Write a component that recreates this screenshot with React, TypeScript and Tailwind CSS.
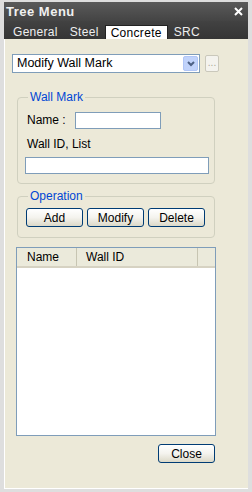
const FONT = "font-['Liberation_Sans',Arial,sans-serif]";

function XpButton({ label, className = '' }: { label: string; className?: string }) {
  return (
    <button
      className={`h-[19px] rounded-[3px] border border-[#003c74] bg-gradient-to-b from-white via-[#f4f3ee] to-[#dcd9c8] text-[12px] leading-none text-black ${className}`}
    >
      {label}
    </button>
  );
}

function GroupBox({ title, className = '', children }: { title: string; className?: string; children: React.ReactNode }) {
  return (
    <fieldset className={`ml-[12px] w-[198px] rounded-[4px] border border-[#d0d0bf] ${className}`}>
      <legend className="ml-[10px] px-[2px] text-[12px] leading-[12px] text-[#0046d5]">{title}</legend>
      {children}
    </fieldset>
  );
}

export default function App() {
  const tabs = ['General', 'Steel', 'Concrete', 'SRC'];
  const active = 'Concrete';

  return (
    <div className={`flex h-[492px] w-[252px] flex-col bg-[#dedede] pl-[4px] pr-[4px] pt-[2px] pb-[3px] ${FONT}`}>
      {/* Title bar */}
      <div className="flex h-[19px] items-center justify-between bg-gradient-to-b from-[#5a5a5a] to-[#444444] pl-[2px] pr-[5px]">
        <span className="text-[13px] font-bold tracking-[0.5px] text-[#f0f0f0]">Tree Menu</span>
        <svg width="9" height="9" viewBox="0 0 9 9">
          <path d="M1 1 L8 8 M8 1 L1 8" stroke="white" strokeWidth="2" />
        </svg>
      </div>

      {/* Tabs */}
      <div className="flex h-[18px] items-end bg-gradient-to-b from-[#424242] to-[#353535] pl-[3px] tracking-[0.3px]">
        {tabs.map((t) =>
          t === active ? (
            <div
              key={t}
              className="flex h-[14px] items-center border border-b-0 border-[#222] bg-white px-[5px] text-[12px] leading-none text-black"
            >
              {t}
            </div>
          ) : (
            <div key={t} className="flex h-[14px] items-center px-[6px] text-[12px] leading-none text-[#eeeeee]">
              {t}
            </div>
          )
        )}
      </div>

      {/* Content */}
      <div className="flex flex-1 flex-col border-l border-b border-white bg-[#ece9d8] text-[12px] text-black">
        {/* Combo */}
        <div className="ml-[7px] mt-[15px] flex items-center gap-[5px]">
          <div className="flex h-[19px] w-[188px] items-center border border-[#7f9db9] bg-white">
            <span className="flex-1 pl-[4px] text-[12.5px] leading-none">Modify Wall Mark</span>
            <div className="m-[1px] flex h-[15px] w-[15px] items-center justify-center rounded-[2px] border border-[#b1c6f7] bg-[#c1d3fb]">
              <svg width="8" height="6" viewBox="0 0 8 6">
                <path d="M1 1 L4 4 L7 1" stroke="#4d6185" strokeWidth="2" fill="none" />
              </svg>
            </div>
          </div>
          <div className="flex h-[17px] w-[14px] items-end justify-center rounded-[2px] border border-[#cac8bb] bg-[#f4f3ee] pb-[3px] text-[10px] leading-none text-[#aca899]">
            ...
          </div>
        </div>

        {/* Wall Mark */}
        <GroupBox title="Wall Mark" className="mt-[18px] h-[93px]">
          <div className="ml-[9px] mt-[8px] flex items-center gap-[9px]">
            <span>Name :</span>
            <div className="h-[17px] w-[86px] border border-[#7f9db9] bg-white" />
          </div>
          <div className="ml-[9px] mt-[8px] leading-[14px]">Wall ID, List</div>
          <div className="ml-[7px] mt-[6px] h-[17px] w-[184px] border border-[#7f9db9] bg-white" />
        </GroupBox>

        {/* Operation */}
        <GroupBox title="Operation" className="mt-[6px] h-[48px]">
          <div className="ml-[8px] mt-[6px] flex gap-[4px]">
            <XpButton label="Add" className="w-[57px]" />
            <XpButton label="Modify" className="w-[57px]" />
            <XpButton label="Delete" className="w-[57px]" />
          </div>
        </GroupBox>

        {/* List */}
        <div className="ml-[11px] mt-[9px] h-[189px] w-[200px] border border-[#7f9db9] bg-white">
          <div className="flex h-[20px] items-center border-b-2 border-[#d6d2c2] bg-[#ebeadb]">
            <div className="flex h-full w-[60px] items-center border-r border-[#c7c5b2] pl-[10px]">Name</div>
            <div className="flex h-full w-[121px] items-center border-r border-[#c7c5b2] pl-[9px]">Wall ID</div>
            <div className="h-full flex-1" />
          </div>
        </div>

        {/* Close */}
        <div className="mr-[33px] mt-[8px] flex justify-end">
          <XpButton label="Close" className="w-[57px]" />
        </div>
      </div>
    </div>
  );
}
